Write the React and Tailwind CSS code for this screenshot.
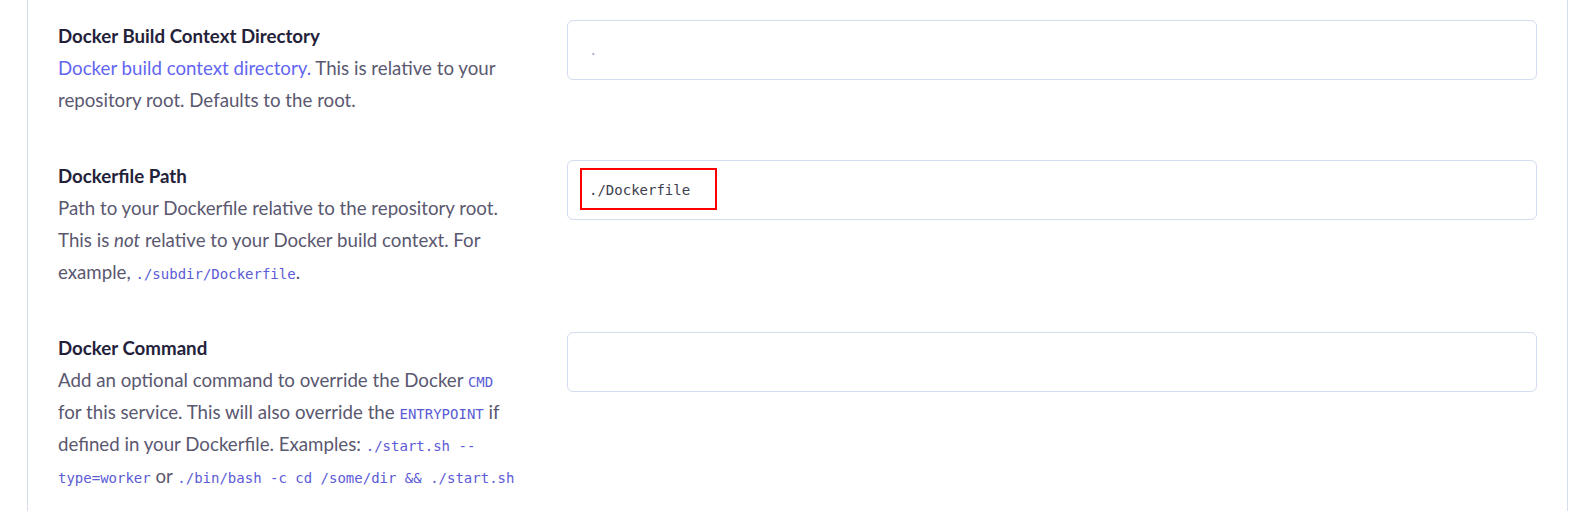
export default function App() {
  const sans = { fontFamily: "Lato, 'Liberation Sans', sans-serif" };
  const Code = ({ children }) => (
    <code className="font-['DejaVu_Sans_Mono',monospace] text-[14px] leading-none text-[#5b5bd6]">{children}</code>
  );
  const Input = ({ value, placeholder, boxed }) => (
    <div className="relative flex h-[60px] items-center rounded-md border border-[#d4dcef] bg-white px-[21px] font-['DejaVu_Sans_Mono',monospace] text-[14px]">
      {value ? (
        <span className="text-[#3d3d4e]">{value}</span>
      ) : (
        <span className="text-[#a7aed0]">{placeholder}</span>
      )}
      {boxed && (
        <div className="absolute left-[12px] top-[7px] h-[42px] w-[137px] border-2 border-[#ff0000]" />
      )}
    </div>
  );
  const Row = ({ title, children, input }) => (
    <div className="grid grid-cols-[462px_1fr] gap-x-[47px]">
      <div>
        <div className="text-[18.7px] font-bold leading-[32px] text-[#24223a]">{title}</div>
        <div className="text-[18.7px] leading-[32px] text-[#5a5870]">{children}</div>
      </div>
      <div>{input}</div>
    </div>
  );
  return (
    <div className="min-h-[511px] bg-white" style={sans}>
      <div className="ml-[27px] flex min-h-[511px] w-[1541px] flex-col gap-[44px] border-x border-[#d5ddee] px-[30px] pt-5">
        <Row title="Docker Build Context Directory" input={<Input placeholder="." />}>
          <span className="text-[#6366f1]">Docker build context directory.</span> This is relative to your repository root. Defaults to the root.
        </Row>
        <Row title="Dockerfile Path" input={<Input value="./Dockerfile" boxed />}>
          Path to your Dockerfile relative to the repository root. This is <em>not</em> relative to your Docker build context. For example, <Code>./subdir/Dockerfile</Code>.
        </Row>
        <Row title="Docker Command" input={<Input placeholder="" />}>
          Add an optional command to override the Docker <Code>CMD</Code> for this service. This will also override the <Code>ENTRYPOINT</Code> if defined in your Dockerfile. Examples: <Code>./start.sh --type=worker</Code> or <Code>./bin/bash -c cd /some/dir &amp;&amp; ./start.sh</Code>
        </Row>
      </div>
    </div>
  );
}
